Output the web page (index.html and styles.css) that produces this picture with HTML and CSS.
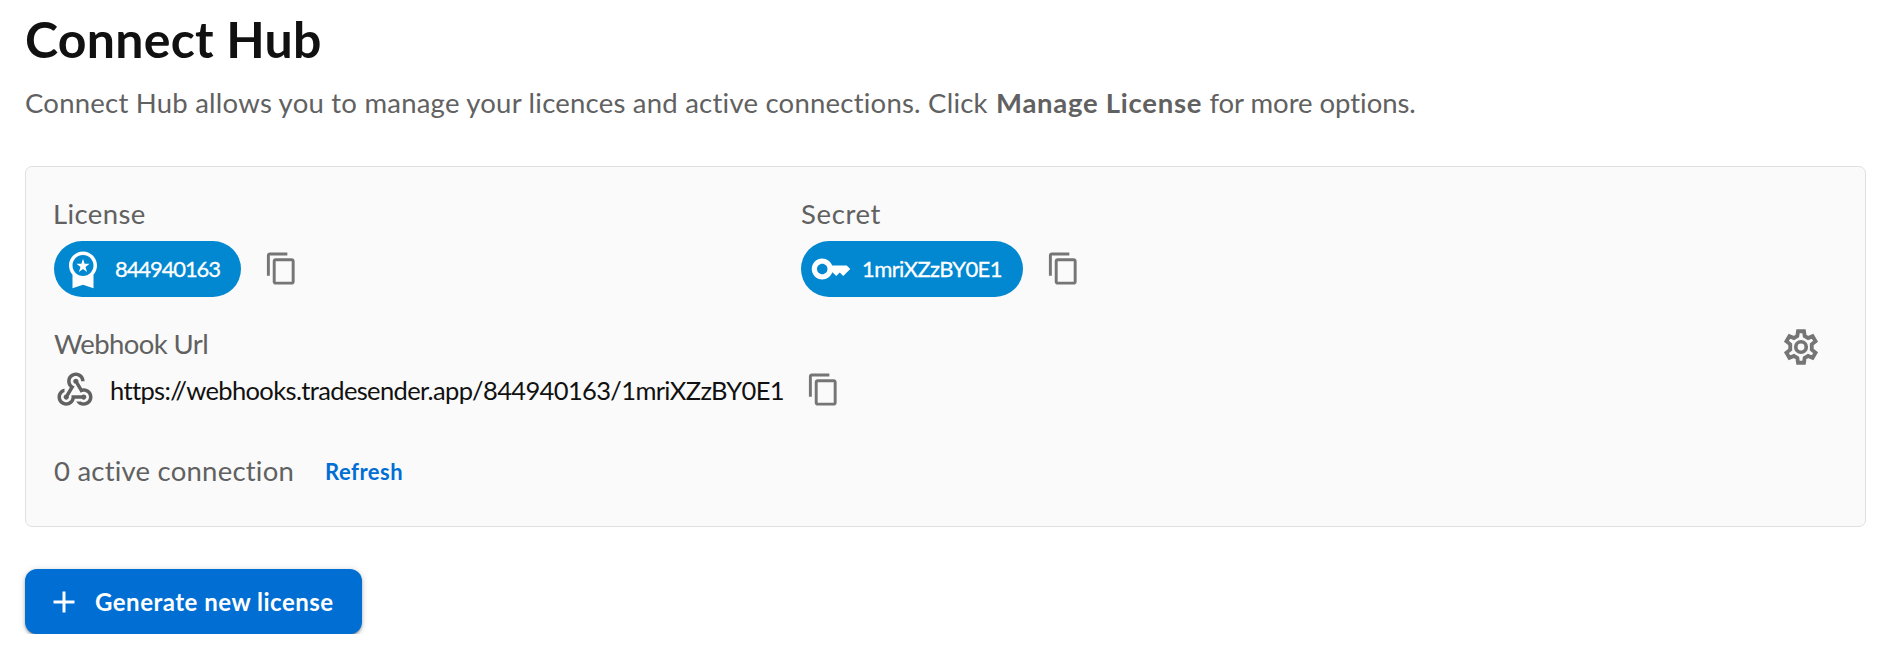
FILE: index.html
```
<!DOCTYPE html>
<html lang="en">
<head>
<meta charset="utf-8">
<title>Connect Hub</title>
<link rel="stylesheet" href="styles.css">
</head>
<body>
<svg class="sprite" aria-hidden="true">
  <symbol id="copy" viewBox="0 0 24 24"><path d="M16 1H4c-1.1 0-2 .9-2 2v14h2V3h12V1zm3 4H8c-1.1 0-2 .9-2 2v14c0 1.1.9 2 2 2h11c1.1 0 2-.9 2-2V7c0-1.1-.9-2-2-2zm0 16H8V7h11v14z"/></symbol>
</svg>
<main class="page">
  <h1 class="title">Connect Hub</h1>
  <p class="intro">Connect Hub allows you to manage your licences and active connections. Click <strong class="intro-strong">Manage License</strong> <span class="intro-end">for more options.</span></p>

  <section class="card">
    <div class="details">
      <div class="pair">
        <div class="field">
          <div class="label label-license">License</div>
          <div class="value">
            <span class="chip chip-license">
              <svg class="icon" viewBox="0 0 24 24"><path d="M9.68 13.69 12 11.93l2.31 1.76-.88-2.85L15.75 9h-2.84L12 6.19 11.09 9H8.25l2.31 1.84-.88 2.85zM20 10c0-4.42-3.58-8-8-8s-8 3.58-8 8c0 2.03.76 3.87 2 5.28V23l6-2 6 2v-7.72c1.24-1.41 2-3.25 2-5.28zm-8-6c3.31 0 6 2.69 6 6s-2.69 6-6 6-6-2.69-6-6 2.69-6 6-6z"/></svg>
              <span class="chip-text">844940163</span>
            </span>
            <button class="copy" aria-label="Copy license"><svg class="copy-icon"><use href="#copy"/></svg></button>
          </div>
        </div>
        <div class="field">
          <div class="label label-secret">Secret</div>
          <div class="value">
            <span class="chip chip-secret">
              <svg class="icon" viewBox="0 0 24 24"><path d="M21 10h-8.35C11.83 7.67 9.61 6 7 6c-3.31 0-6 2.69-6 6s2.69 6 6 6c2.61 0 4.83-1.67 5.65-4H13l2 2 2-2 2 2 4-4.04L21 10zM7 15c-1.65 0-3-1.35-3-3s1.35-3 3-3 3 1.35 3 3-1.35 3-3 3z"/></svg>
              <span class="chip-text">1mriXZzBY0E1</span>
            </span>
            <button class="copy" aria-label="Copy secret"><svg class="copy-icon"><use href="#copy"/></svg></button>
          </div>
        </div>
      </div>

      <div class="webhook">
        <div class="label label-webhook">Webhook Url</div>
        <div class="url-row">
          <svg class="icon icon-webhook" viewBox="0 0 24 24"><path d="M10 15h5.88c.27-.31.67-.5 1.12-.5.83 0 1.5.67 1.5 1.5s-.67 1.5-1.5 1.5c-.44 0-.84-.19-1.12-.5H11.9c-.46 2.28-2.48 4-4.9 4-2.76 0-5-2.24-5-5 0-2.42 1.72-4.44 4-4.9v2.07c-1.16.41-2 1.53-2 2.83 0 1.65 1.35 3 3 3s3-1.35 3-3v-1zm2.5-11c1.65 0 3 1.35 3 3h2c0-2.76-2.24-5-5-5s-5 2.24-5 5c0 1.43.6 2.71 1.55 3.62l-2.35 3.9c-.68.14-1.2.75-1.2 1.48 0 .83.67 1.5 1.5 1.5s1.5-.67 1.5-1.5c0-.16-.02-.31-.07-.45l3.38-5.63C10.49 9.61 9.5 8.42 9.5 7c0-1.65 1.35-3 3-3zm4.5 9c-.64 0-1.23.2-1.72.54l-3.05-5.07C11.53 8.35 11 7.74 11 7c0-.83.67-1.5 1.5-1.5S14 6.17 14 7c0 .15-.02.29-.06.43l2.19 3.65c.28-.05.57-.08.87-.08 2.76 0 5 2.24 5 5s-2.24 5-5 5c-1.85 0-3.47-1.01-4.33-2.5h2.67c.48.32 1.05.5 1.66.5 1.65 0 3-1.35 3-3s-1.35-3-3-3z"/></svg>
          <span class="url">https://webhooks.tradesender.app/844940163/1mriXZzBY0E1</span>
          <button class="copy" aria-label="Copy webhook url"><svg class="copy-icon"><use href="#copy"/></svg></button>
        </div>
      </div>

      <div class="status">
        <span class="label label-status">0 active connection</span>
        <button class="refresh">Refresh</button>
      </div>
    </div>
    <button class="settings" aria-label="Manage license">
      <svg class="icon" viewBox="0 0 24 24"><path fill="none" stroke="currentColor" stroke-width="2.2" d="M10.3 3h3.4l.4 2.75 1.95 1.12 2.57-1.04 1.7 2.95-2.17 1.7v3.04l2.17 1.7-1.7 2.95-2.57-1.04-1.95 1.12-.4 2.75h-3.4l-.4-2.75-1.95-1.12-2.57 1.04-1.7-2.95 2.17-1.7v-3.04l-2.17-1.7 1.7-2.95 2.57 1.04L9.9 5.75z"/><circle cx="12" cy="12" r="3" fill="none" stroke="currentColor" stroke-width="2.1"/></svg>
    </button>
  </section>

  <button class="generate">
    <svg class="plus" viewBox="0 0 24 24"><path d="M19 13h-6v6h-2v-6H5v-2h6V5h2v6h6v2z"/></svg>
    <span>Generate new license</span>
  </button>
</main>
</body>
</html>
```
FILE: styles.css
```
* { box-sizing: border-box; }

body {
  margin: 0;
  background: #fff;
  color: #111;
  font-family: Lato, "Open Sans", sans-serif;
}

button {
  padding: 0;
  border: 0;
  background: none;
  font-family: inherit;
}

svg { display: block; fill: currentColor; flex: none; }
.sprite { display: none; }
.icon { width: 42px; height: 42px; }

.page { padding: 9px 30px 0 25px; }

.title {
  margin: 0;
  font-size: 50px;
  font-weight: 700;
  line-height: 60px;
  letter-spacing: 0.25px;
}

.intro {
  margin: 17px 0 46px;
  color: #616161;
  font-size: 27.5px;
  line-height: 34px;
  letter-spacing: 0.23px;
  white-space: nowrap;
}
.intro-strong { margin-left: 1px; letter-spacing: 0.72px; }
.intro-end { letter-spacing: -0.04px; }

.card {
  display: flex;
  align-items: center;
  justify-content: space-between;
  height: 361px;
  padding: 0 43px 0 28px;
  border: 1px solid #e0e0e0;
  border-radius: 7px;
  background: #fafafa;
}

.details { flex: 1; padding-bottom: 9px; }
.pair { display: grid; grid-template-columns: 747px 1fr; }

.label { color: #616161; font-size: 27.5px; line-height: 34px; }
.label-license { letter-spacing: 0.4px; margin-left: -1px; }
.label-secret { letter-spacing: 0.65px; }
.label-webhook { letter-spacing: -0.6px; }
.label-status { letter-spacing: 0.22px; }

.value { display: flex; align-items: center; gap: 23px; margin-top: 10px; }

.chip {
  display: flex;
  align-items: center;
  height: 56px;
  padding-left: 8px;
  border-radius: 28px;
  background: #0288d1;
  color: #fff;
  font-size: 22px;
  white-space: nowrap;
}
.chip-license { width: 187px; gap: 11px; letter-spacing: -1.1px; }
.chip-secret { width: 222px; padding-left: 9px; gap: 10px; letter-spacing: -0.6px; }
.chip-text { -webkit-text-stroke: 0.3px currentColor; }

.copy { color: #757575; }
.copy-icon { width: 35px; height: 35px; }

.webhook { margin-top: 30px; }
.url-row { display: flex; align-items: center; height: 42px; margin-top: 8px; }
.icon-webhook { color: #616161; }
.url {
  width: 696px;
  margin: 0 0 0 14px;
  color: #111;
  font-size: 25.5px;
  letter-spacing: -0.64px;
  white-space: nowrap;
}

.status { display: flex; align-items: center; margin-top: 43px; }
.refresh {
  margin-left: 31px;
  padding-top: 1px;
  color: #006ed3;
  font-size: 22px;
  font-weight: 700;
  line-height: 33px;
  letter-spacing: 0.5px;
}

.settings { color: #757575; }

.generate {
  display: flex;
  align-items: center;
  gap: 13px;
  width: 337px;
  height: 65px;
  margin-top: 42px;
  padding-left: 21px;
  border-radius: 12px;
  background: #006ed3;
  box-shadow: 0 3px 2px -2px rgba(0, 0, 0, .3), 0 2px 3px rgba(0, 0, 0, .25), 0 1px 7px rgba(0, 0, 0, .16);
  color: #fff;
  font-size: 24px;
  font-weight: 700;
  letter-spacing: 0.5px;
  white-space: nowrap;
}
.plus { width: 36px; height: 36px; }
```
